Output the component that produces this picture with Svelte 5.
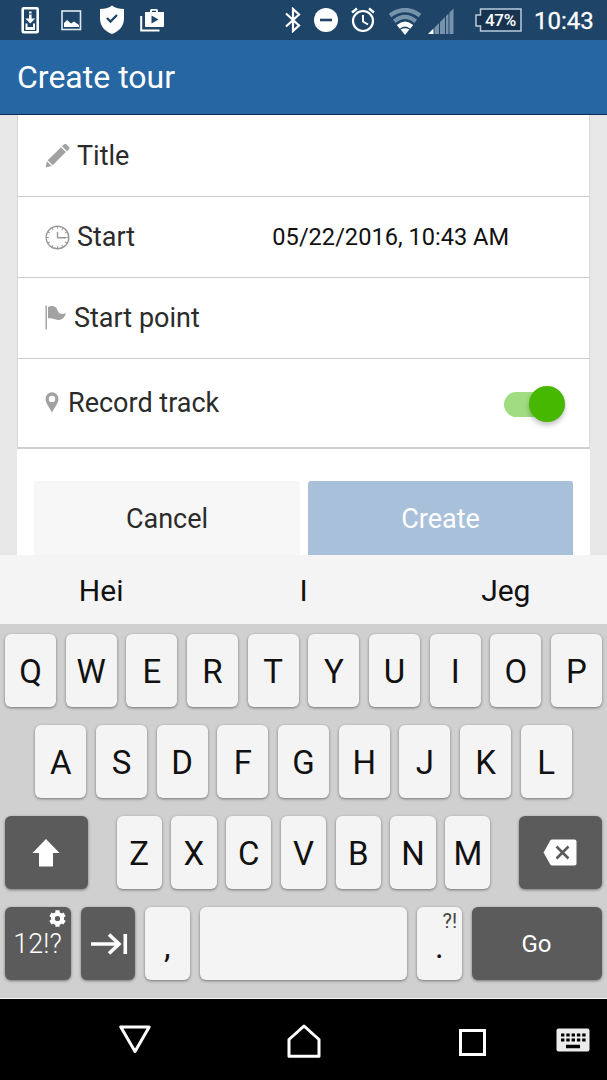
<script lang="ts">
  const suggestions = ['Hei', 'I', 'Jeg'];
  const topRow = [...'QWERTYUIOP'];
  const homeRow = [...'ASDFGHJKL'];
  const bottomRow = [...'ZXCVBNM'];
  const ticks = Array.from({ length: 12 }, (_, i) => i * 30);

  let recording = $state(true);
</script>

<div class="screen">
  <header class="status-bar">
    <div class="notifications">
      <svg width="20" height="28" viewBox="0 0 20 28" aria-hidden="true">
        <rect x="2.700" y="2.200" width="15" height="24" rx="1" fill="none" stroke="#fff" stroke-width="2.600" />
        <path d="M9 5.500h2.600v2H9zM9 8.500h2.600v4h3.700l-5 5-5-5H9zM5.500 17.500h2v3.500h5.500v-3.500h2V24h-9.500z" fill="#fff" />
      </svg>
      <svg class="picture" width="21" height="21" viewBox="0 0 21 21" aria-hidden="true">
        <rect x="1" y="1" width="18.500" height="18.500" fill="none" stroke="#dfe8f1" stroke-width="1.600" />
        <path d="M3 17v-4l3-3 4 3.500 3-2 5 3.500v2z" fill="#fff" />
      </svg>
      <svg class="shield" width="26" height="30" viewBox="0 0 26 30" aria-hidden="true">
        <path d="M13 .5c3.500 2.800 7.500 3.500 12 3.500v9.500C25 21 20 26.500 13 29 6 26.500 1 21 1 13.500V4c4.500 0 8.500-.7 12-3.500z" fill="#fff" />
        <path d="M8 13l3.500 3.500 6.500-6.500" fill="none" stroke="#1e4468" stroke-width="2.300" />
      </svg>
      <svg class="play" width="25" height="24" viewBox="0 0 25 24" aria-hidden="true">
        <path d="M1.200 8v14.500H19.500" fill="none" stroke="#fff" stroke-width="2" />
        <path fill-rule="evenodd" d="M5 4h5V2.500Q10 1 11.500 1h5Q18 1 18 2.500V4h6v14q0 1-1 1H6q-1 0-1-1zM12 4h4V2.700h-4zM11.500 7.500v8l7-4z" fill="#fff" />
      </svg>
    </div>

    <div class="system">
      <svg width="18" height="26" viewBox="0 0 18 26" aria-hidden="true">
        <path d="M2 6.500l13 12-6 5.500V2l6 5.500-13 12" fill="none" stroke="#fff" stroke-width="2.200" />
      </svg>
      <svg class="dnd" width="24" height="24" viewBox="0 0 24 24" aria-hidden="true">
        <circle cx="12" cy="12" r="12" fill="#fff" />
        <path d="M6 12h12" stroke="#1e4468" stroke-width="2.600" />
      </svg>
      <svg class="alarm" width="24" height="26" viewBox="0 0 24 26" aria-hidden="true">
        <g fill="none" stroke="#fff">
          <circle cx="12" cy="14" r="10" stroke-width="2.200" />
          <path d="M12 8v6.500l5 3" stroke-width="2" />
          <path d="M1 5.500l5-4M23 5.500l-5-4" stroke-width="2.400" />
        </g>
      </svg>
      <svg class="wifi" width="34" height="28" viewBox="0 0 34 28" aria-hidden="true">
        <g fill="none" stroke="#7792ab" stroke-width="4.200">
          <path d="M2 7.500Q17-3.500 32 7.500" />
          <path d="M6.300 13.300Q17 4.500 27.700 13.300" />
        </g>
        <path d="M8.800 17Q17 10 25.200 17l-3 3.700Q17 16.500 11.800 20.700z" fill="#fff" />
        <path d="M12.700 21.500q4.300-2.600 8.600 0l-4.300 5.500z" fill="#fff" />
      </svg>
      <svg class="signal" width="26" height="27" viewBox="0 0 26 27" aria-hidden="true">
        <path d="M6.500 19.500L11 15v11H6.500zM12 14l5-5v17h-5zM18 8l2.500-2.500V26H18zM21.500 4.500l4-4V26h-4z" fill="#7792ab" />
        <path d="M0 26l5.500-5.500V26z" fill="#fff" />
      </svg>
      <span class="battery">
        <svg width="47" height="24" viewBox="0 0 47 24" aria-hidden="true">
          <path d="M5.500 1h40.500v22H5.500v-5H1V7h4.500z" fill="#173350" stroke="#b9cbdc" stroke-width="1.500" />
        </svg>
        <span class="battery-level">47%</span>
      </span>
      <time class="clock">10:43</time>
    </div>
  </header>

  <h1 class="title-bar"><span>Create tour</span></h1>

  <main class="content">
    <div class="panel">
      <div class="fields">
        <div class="field">
          <svg width="25" height="25" viewBox="0 0 25 25" aria-hidden="true">
            <path d="M.5 24.500L1.900 18.300l4.700 4.700zM2.700 17.200L16 4.200l4.900 4.900L7.700 22.200zM17 3.200L19 1.200q1.100-1 2.200 0L24 4q1 1.100 0 2.200l-2 2z" fill="#a2a2a2" />
          </svg>
          <span class="label">Title</span>
        </div>
        <div class="field">
          <svg width="25" height="25" viewBox="0 0 25 25" aria-hidden="true">
            <g fill="none" stroke="#999">
              <circle cx="12.500" cy="12.500" r="11.300" stroke-width="1.400" />
              <path d="M12.500 7v5.700H21" stroke-width="1.400" />
              {#each ticks as angle (angle)}
                <path d="M12.500 1.500v2.300" stroke-width="1" transform="rotate({angle} 12.500 12.500)" />
              {/each}
            </g>
          </svg>
          <span class="label">Start</span>
          <span class="value">05/22/2016, 10:43 AM</span>
        </div>
        <div class="field">
          <svg class="flag" width="22" height="25" viewBox="0 0 22 25" aria-hidden="true">
            <path d="M1.200.5v24" stroke="#999" stroke-width="1.300" />
            <path d="M3 2c3-1.700 6-1.300 8 .5 1.500 1.500 1.600 5 4 6 2 .8 4 .5 6-.4-1.500 5-4.500 7.400-8 6.900-3.500-.9-6-2.400-10-1.500z" fill="#a2a2a2" />
          </svg>
          <span class="label">Start point</span>
        </div>
        <div class="field field-record">
          <svg class="pin" width="14" height="21" viewBox="0 0 14 21" aria-hidden="true">
            <path fill-rule="evenodd" d="M7 .3a6.500 6.500 0 0 1 6.500 6.500C13.500 11.500 9 16 7 20.700 5 16 .5 11.500.5 6.800A6.500 6.500 0 0 1 7 .3zM7 3.700a3.200 3.200 0 1 0 0 6.400 3.200 3.200 0 0 0 0-6.400z" fill="#a2a2a2" />
          </svg>
          <span class="label">Record track</span>
          <button
            class="switch"
            class:on={recording}
            role="switch"
            aria-checked={recording}
            aria-label="Record track"
            onclick={() => (recording = !recording)}
          >
            <span class="thumb"></span>
          </button>
        </div>
      </div>
      <div class="actions">
        <button class="cancel">Cancel</button>
        <button class="create">Create</button>
      </div>
    </div>
  </main>

  <div class="suggestions">
    {#each suggestions as word (word)}
      <span>{word}</span>
    {/each}
  </div>

  <section class="keyboard">
    <div class="row">
      {#each topRow as letter (letter)}
        <button class="key">{letter}</button>
      {/each}
    </div>
    <div class="row row-home">
      {#each homeRow as letter (letter)}
        <button class="key">{letter}</button>
      {/each}
    </div>
    <div class="row row-bottom">
      <button class="key dark wide" aria-label="Shift">
        <svg width="28" height="28" viewBox="0 0 28 28" aria-hidden="true">
          <path d="M14 0l13.500 14H21v13.500H7V14H.5z" fill="#fff" />
        </svg>
      </button>
      <div class="letters">
        {#each bottomRow as letter (letter)}
          <button class="key">{letter}</button>
        {/each}
      </div>
      <button class="key dark wide" aria-label="Backspace">
        <svg width="34" height="27" viewBox="0 0 34 27" aria-hidden="true">
          <path d="M9 .5h22.500q2 0 2 2v22q0 2-2 2H9q-1 0-1.700-1L.5 13.500l6.800-12Q8 .5 9 .5z" fill="#fff" />
          <path d="M13.500 7.500l12 12m0-12l-12 12" stroke="#5b5b5b" stroke-width="2.600" />
        </svg>
      </button>
    </div>
    <div class="row row-space">
      <button class="key dark symbols">
        12!?
        <svg class="gear" width="17" height="17" viewBox="0 0 17 17" aria-hidden="true">
          <circle cx="8.500" cy="8.500" r="4.600" fill="none" stroke="#fff" stroke-width="4" />
          {#each [0, 60, 120] as angle (angle)}
            <path d="M8.500.3v3M8.500 13.700v3" stroke="#fff" stroke-width="4.200" transform="rotate({angle} 8.500 8.500)" />
          {/each}
        </svg>
      </button>
      <button class="key dark tab" aria-label="Tab">
        <svg width="38" height="22" viewBox="0 0 38 22" aria-hidden="true">
          <path d="M1 11h28M19 1.500l10 9.500-10 9.500" fill="none" stroke="#fff" stroke-width="3.600" />
          <path d="M35.300 1v20" stroke="#fff" stroke-width="3.600" />
        </svg>
      </button>
      <button class="key punctuation">,</button>
      <button class="key" aria-label="Space"></button>
      <button class="key punctuation">.<span class="hint">?!</span></button>
      <button class="key dark go">Go</button>
    </div>
  </section>

  <nav class="nav-bar">
    <svg class="back" width="32" height="29" viewBox="0 0 32 29" aria-hidden="true">
      <path d="M1.800 1.900h28.400L16 26.500z" fill="none" stroke="#fff" stroke-width="3" stroke-linejoin="round" />
    </svg>
    <svg class="home" width="34" height="34" viewBox="0 0 34 34" aria-hidden="true">
      <path d="M2 15.500L17 2l15 13.500v16.700H2z" fill="none" stroke="#fff" stroke-width="3" stroke-linejoin="round" />
    </svg>
    <svg class="recent" width="27" height="27" viewBox="0 0 27 27" aria-hidden="true">
      <path d="M1.500 1.500h24v24h-24z" fill="none" stroke="#fff" stroke-width="3" />
    </svg>
    <svg class="ime" width="34" height="24" viewBox="0 0 34 24" aria-hidden="true">
      <rect x=".5" y=".5" width="33" height="23" rx="2" fill="#ececec" />
      <path d="M5 7h25M5 12h25" stroke="#000" stroke-width="3.200" stroke-dasharray="3.400 1.900" />
      <path d="M10 18.500h14" stroke="#000" stroke-width="3.500" />
    </svg>
  </nav>
</div>

<style>
  :global(body) {
    margin: 0;
    background: #000;
  }

  .screen {
    width: 607px;
    height: 1080px;
    overflow: hidden;
    display: flex;
    flex-direction: column;
    font-family: Roboto, sans-serif;
    color: #2b2b2b;
  }

  svg {
    display: block;
    flex-shrink: 0;
  }

  button {
    font: inherit;
    color: inherit;
    border: 0;
    padding: 0;
    margin: 0;
  }

  .status-bar {
    height: 40px;
    box-sizing: border-box;
    padding: 0 13px 0 20px;
    display: flex;
    justify-content: space-between;
    align-items: center;
    background: #1e4468;
    color: #fff;
  }

  .notifications,
  .system {
    display: flex;
    align-items: center;
  }

  .picture {
    margin-left: 21px;
  }

  .shield {
    margin-left: 17px;
  }

  .play {
    margin-left: 15px;
  }

  .dnd {
    margin-left: 12px;
  }

  .alarm {
    margin-left: 13px;
  }

  .wifi {
    margin-left: 13px;
    margin-top: 3px;
  }

  .signal {
    margin-left: 6px;
    margin-top: 3px;
  }

  .battery {
    display: grid;
    place-items: center;
    margin-left: 21px;
  }

  .battery > * {
    grid-area: 1 / 1;
  }

  .battery-level {
    padding-left: 4px;
    font-size: 17px;
    font-weight: 500;
    letter-spacing: -0.2px;
  }

  .clock {
    width: 60px;
    margin-left: 12px;
    margin-top: 2px;
    font-size: 24px;
    font-weight: 400;
    -webkit-text-stroke: 0.3px #fff;
  }

  .title-bar {
    height: 75px;
    box-sizing: border-box;
    margin: 0;
    padding: 0 17px;
    display: flex;
    align-items: center;
    background: #2666a3;
    border-bottom: 1px solid #0b2c50;
    color: #fff;
    font-size: 32px;
    font-weight: 400;
  }

  .content {
    height: 440px;
    box-sizing: border-box;
    padding: 0 17px;
    background: #e7e7e7;
    overflow: hidden;
  }

  .panel {
    height: 100%;
    background: #fff;
  }

  .fields {
    border: 1px solid #d9d9d9;
    border-top: 0;
    border-bottom: 2px solid #cfcfcf;
  }

  .field {
    height: 81px;
    box-sizing: border-box;
    padding: 0 24px 0 27px;
    display: flex;
    align-items: center;
    gap: 7px;
    border-bottom: 1px solid #cacaca;
  }

  .field:first-child {
    height: 82px;
  }

  .field-record {
    height: 88px;
    gap: 9px;
    border-bottom: 0;
  }

  .flag,
  .pin {
    margin-top: -2px;
  }

  .label {
    font-size: 27px;
  }

  .value {
    margin-left: auto;
    margin-right: 56px;
    color: #111;
    font-size: 23.600px;
  }

  .switch {
    width: 61px;
    height: 25px;
    margin-left: auto;
    margin-top: 2px;
    display: flex;
    align-items: center;
    border-radius: 13px;
    background: #cfcfcf;
  }

  .thumb {
    width: 36px;
    height: 36px;
    border-radius: 50%;
    background: #f5f5f5;
    box-shadow: 0 3px 5px rgb(0 0 0 / 25%);
  }

  .switch.on {
    justify-content: flex-end;
    background: #a0dc82;
  }

  .switch.on .thumb {
    background: #46b800;
  }

  .actions {
    padding: 32px 17px 0 17px;
    display: grid;
    grid-template-columns: 266px 265px;
    justify-content: space-between;
  }

  .actions button {
    height: 76px;
    border-radius: 3px;
    font-size: 27px;
  }

  .cancel {
    background: #f7f7f7;
  }

  .actions .create {
    background: #a8c0da;
    color: #fff;
  }

  .suggestions {
    height: 69px;
    box-sizing: border-box;
    padding-top: 1px;
    display: grid;
    grid-template-columns: repeat(3, 1fr);
    place-items: center;
    background: #f4f4f4;
    color: #111;
    font-size: 30px;
  }

  .keyboard {
    height: 375px;
    box-sizing: border-box;
    padding: 10px 5px 0;
    display: flex;
    flex-direction: column;
    gap: 18px;
    background: #d0d0d0;
    border-bottom: 1px solid #f4f4f4;
  }

  .row {
    height: 73px;
    display: grid;
    grid-template-columns: repeat(10, 1fr);
    column-gap: 9.700px;
  }

  .row-home {
    grid-template-columns: repeat(9, 1fr);
    padding: 0 30.300px;
  }

  .row-bottom {
    grid-template-columns: 83px 374px 83px;
    justify-content: space-between;
  }

  .letters {
    display: grid;
    grid-template-columns: repeat(7, 1fr);
    column-gap: 9.500px;
  }

  .row-space {
    grid-template-columns: 66px 54px 45.500px 207px 45.500px 130px;
    column-gap: 0;
    justify-content: space-between;
  }

  .key {
    position: relative;
    display: flex;
    align-items: center;
    justify-content: center;
    padding-top: 2px;
    border-radius: 6px;
    background: #f4f4f4;
    box-shadow: 0 1px 3px rgb(0 0 0 / 45%);
    color: #111;
    font-size: 33px;
  }

  .dark {
    background: #5b5b5b;
    color: #fff;
  }

  .wide {
    padding: 0 1px 0 0;
  }

  .symbols {
    padding: 0 1px 0 0;
    font-size: 27px;
    font-weight: 300;
  }

  .tab {
    padding: 0 0 0 2px;
  }

  .gear {
    position: absolute;
    top: 3px;
    right: 5px;
  }

  .punctuation {
    padding-top: 6px;
  }

  .hint {
    position: absolute;
    top: 2px;
    right: 5px;
    color: #444;
    font-size: 20px;
  }

  .go {
    padding: 0 1px 0 0;
    font-size: 24px;
  }

  .nav-bar {
    flex: 1;
    padding: 26px 17px 0 119px;
    display: flex;
    align-items: flex-start;
    background: #000;
  }

  .home {
    margin-left: 136px;
    margin-top: -1px;
  }

  .recent {
    margin: 4px 0 0 138px;
  }

  .ime {
    margin: 3px 0 0 auto;
  }
</style>
